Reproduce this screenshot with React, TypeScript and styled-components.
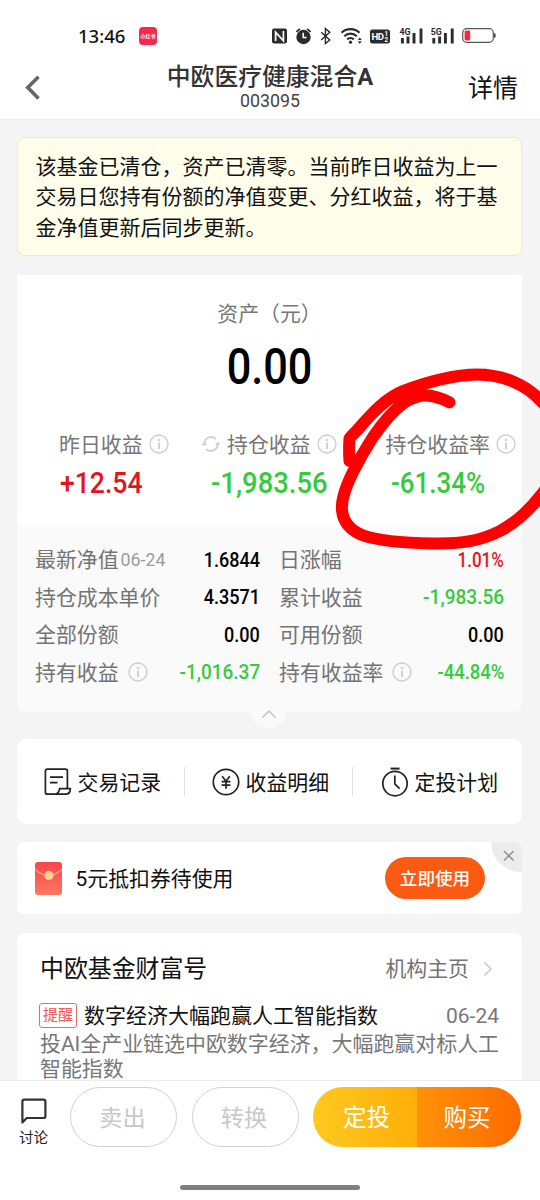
import React from 'react';
import styled, { createGlobalStyle } from 'styled-components';

const Global = createGlobalStyle`
  * { box-sizing: border-box; }
  body { margin: 0; background: #f4f4f4; }
`;

const RED = '#e8121a';
const GREEN = '#36cb3c';

const Screen = styled.div`
  position: relative;
  display: flex;
  flex-direction: column;
  width: 540px;
  height: 1200px;
  overflow: hidden;
  background: #f4f4f4;
  color: #111;
  font-family: Roboto, 'Noto Sans CJK SC', sans-serif;
  font-size: 20.9px;
  line-height: 30px;
  white-space: nowrap;
`;

const Top = styled.header`
  flex: none;
  height: 120px;
  background: #fff;
  border-bottom: 1px solid #f0f0f0;
`;

const StatusBar = styled.div`
  display: flex;
  align-items: center;
  height: 60px;
  padding: 12px 44px 0 78px;
`;

const Clock = styled.span`
  width: 61px;
  font-family: 'Noto Sans', sans-serif;
  font-size: 18.5px;
  font-weight: 500;
  color: #111;
`;

const AppBadge = styled.span`
  display: flex;
  align-items: center;
  justify-content: center;
  width: 18px;
  height: 18px;
  border-radius: 4px;
  background: #f9284a;
  color: #fff;
  font-size: 5px;
  font-weight: 700;
  line-height: 6px;
`;

const StatusIcons = styled.svg`
  display: block;
  margin-left: auto;
`;

const NavBar = styled.div`
  display: grid;
  grid-template-columns: 90px 1fr 90px;
  height: 59px;
`;

const Back = styled.div`
  padding: 15px 0 0 24px;
`;

const NavTitle = styled.div`
  display: flex;
  flex-direction: column;
  align-items: center;
  padding-top: 3px;
`;

const FundName = styled.h1`
  margin: 0;
  font-size: 23.8px;
  line-height: 28px;
  font-weight: 500;
  color: #333;
`;

const FundNameLatin = styled.span`
  font-weight: 700;
`;

const FundCode = styled.div`
  font-size: 17.8px;
  line-height: 20px;
  color: #444;
`;

const Detail = styled.div`
  padding: 13px 22px 0 0;
  text-align: right;
  font-size: 25px;
  line-height: 32px;
  color: #111;
`;

const Content = styled.main`
  flex: none;
  display: flex;
  flex-direction: column;
  height: 960px;
  padding: 17px 18px 0 17px;
  overflow: hidden;
`;

const Notice = styled.p`
  flex: none;
  height: 119px;
  margin: 0 0 19px;
  padding: 14px 17.5px 0;
  border: 1px solid #fbeaa6;
  border-radius: 8px;
  background: #fefeea;
  font-size: 21px;
  line-height: 30.4px;
`;

const Card = styled.section<{ $h: number; $gap: number; $r?: number }>`
  position: relative;
  flex: none;
  display: flex;
  height: ${p => p.$h}px;
  margin-bottom: ${p => p.$gap}px;
  border-radius: ${p => p.$r ?? 8}px;
  background: #fff;
`;

const AssetCard = styled(Card)`
  flex-direction: column;
  background: #fafafa;
  border-radius: 4px 4px 8px 8px;
`;

const Summary = styled.div`
  height: 251px;
  padding-top: 24px;
  border-radius: 4px 4px 8px 8px;
  background: #fff;
`;

const AssetLabel = styled.div`
  text-align: center;
  color: #777;
`;

const Num = styled.span<{ $size: number; $scale: number; $color?: string; $origin?: string }>`
  display: inline-block;
  font-family: Roboto, sans-serif;
  font-size: ${p => p.$size}px;
  font-weight: 500;
  color: ${p => p.$color ?? '#000'};
  transform: scaleX(${p => p.$scale});
  transform-origin: ${p => p.$origin ?? 'center'};
`;

const AssetValue = styled.div`
  margin-top: 13px;
  height: 50px;
  line-height: 51px;
  text-align: center;
`;

const Stats = styled.div`
  display: grid;
  grid-template-columns: 142px 182px 181px;
  margin-top: 36px;
`;

const Stat = styled.div<{ $pad: number }>`
  padding-left: ${p => p.$pad}px;
`;

const StatLabel = styled.div`
  display: flex;
  align-items: center;
  height: 32px;
  color: #777;
`;

const LabelText = styled.span`
  padding-top: 1px;
`;

const StatValue = styled.div<{ $pad: number }>`
  height: 44px;
  padding-left: ${p => p.$pad}px;
  line-height: 46px;
`;

const IconGap = styled.span<{ $l?: number; $r?: number }>`
  display: flex;
  flex: none;
  margin-left: ${p => p.$l ?? 0}px;
  margin-right: ${p => p.$r ?? 0}px;
`;

const Table = styled.div`
  display: grid;
  grid-template-columns: 225px 225px;
  grid-auto-rows: 37.5px;
  column-gap: 19px;
  padding: 15px 18px 0;
`;

const Cell = styled.div`
  display: flex;
  align-items: center;
  justify-content: space-between;
`;

const CellLabel = styled.span`
  display: flex;
  align-items: center;
  color: #737373;
`;

const SmallDate = styled.span`
  margin-left: 2px;
  font-size: 17.8px;
  color: #9c9c9c;
`;

const Handle = styled.div`
  position: absolute;
  left: 233px;
  bottom: -16px;
  display: flex;
  align-items: center;
  justify-content: center;
  width: 37px;
  height: 37px;
  padding-top: 8px;
  border-radius: 50%;
  background: #fafafa;
`;

const QuickItem = styled.div<{ $w: number; $pad: number }>`
  display: flex;
  align-items: center;
  gap: 6px;
  width: ${p => p.$w}px;
  padding-left: ${p => p.$pad}px;
`;

const QuickText = styled.span`
  padding-top: 2px;
`;

const QuickDivider = styled.i`
  align-self: center;
  width: 1px;
  height: 30px;
  background: #e4e4e4;
`;

const Coupon = styled(Card)`
  align-items: center;
  padding-left: 17px;
  overflow: hidden;
`;

const CouponText = styled.span`
  margin-left: 12.5px;
  padding-top: 2px;
`;

const UseButton = styled.button`
  width: 100px;
  height: 42px;
  margin-left: auto;
  margin-right: 37px;
  padding: 0;
  border: 0;
  border-radius: 21px;
  background: #fb5a13;
  color: #fff;
  font: 500 17.6px/44px Roboto, 'Noto Sans CJK SC', sans-serif;
`;

const CloseCorner = styled.div`
  position: absolute;
  top: 0;
  right: 0;
  width: 31px;
  height: 30px;
  padding: 8px 0 0 12px;
  border-bottom-left-radius: 30px;
  background: #ececec;
  line-height: 0;
`;

const News = styled(Card)`
  flex-direction: column;
  padding: 19px 23px 0;
`;

const NewsHead = styled.div`
  display: flex;
  align-items: center;
  height: 34px;
`;

const NewsName = styled.h2`
  margin: 0 auto 0 0;
  font-size: 23.9px;
  font-weight: 400;
`;

const NewsLink = styled.span`
  display: flex;
  align-items: center;
  gap: 14px;
  padding-right: 6px;
  color: #737373;
`;

const NewsRow = styled.div`
  display: flex;
  align-items: center;
  height: 30px;
  margin-top: 15px;
  font-size: 21px;
`;

const Tag = styled.span`
  width: 38px;
  height: 25px;
  margin-top: -2px;
  margin-left: -1px;
  margin-right: 7px;
  border: 1px solid #ea6a6a;
  border-radius: 3px;
  color: #ea5a5a;
  font-size: 15px;
  line-height: 23px;
  text-align: center;
`;

const NewsDate = styled.span`
  margin-left: auto;
  color: #777;
`;

const NewsBody = styled.p`
  margin: 1px 0 0;
  color: #777;
  font-size: 20.95px;
  line-height: 24.5px;
`;

const BottomBar = styled.footer`
  flex: none;
  height: 120px;
  border-top: 1px solid #ececec;
  background: #fff;
`;

const Actions = styled.div`
  display: flex;
  height: 66px;
  padding: 6px 19px 0 18px;
`;

const Discuss = styled.div`
  display: flex;
  flex-direction: column;
  align-items: center;
  gap: 2px;
  width: 31px;
  margin-right: 21px;
  padding-top: 10px;
  font-size: 14.5px;
  line-height: 24px;
  color: #222;
`;

const DiscussIcon = styled.svg`
  flex: none;
`;

const GhostButton = styled.button`
  width: 107px;
  height: 60px;
  margin-right: 14.5px;
  padding: 0 2px 0 0;
  border: 1px solid #d2d2d2;
  border-radius: 30px;
  background: #fff;
  color: #c8c8c8;
  font: 400 23.2px/60px Roboto, 'Noto Sans CJK SC', sans-serif;
`;

const BuyGroup = styled.div`
  display: flex;
  width: 208px;
  height: 60px;
  overflow: hidden;
  border-radius: 30px;
`;

const BuyButton = styled.button<{ $from: string; $to: string; $left?: number; $right?: number }>`
  flex: none;
  width: 104px;
  padding: 0 ${p => p.$right ?? 0}px 0 ${p => p.$left ?? 0}px;
  border: 0;
  background: linear-gradient(90deg, ${p => p.$from}, ${p => p.$to});
  color: #fff;
  font: 400 23.5px/62px Roboto, 'Noto Sans CJK SC', sans-serif;
`;

const HomeBar = styled.div`
  width: 180px;
  height: 5px;
  margin: 38px auto 0;
  border-radius: 3px;
  background: #808080;
`;

const Marker = styled.svg`
  position: absolute;
  left: 0;
  top: 0;
  pointer-events: none;
`;

const Info = () => (
  <svg width="20" height="20" viewBox="0 0 20 20" fill="none" stroke="#cfcfcf" strokeWidth="1.4">
    <circle cx="10" cy="10" r="9" />
    <path d="M10 8.6V15" strokeWidth="1.9" />
    <circle cx="10" cy="5.9" r="1.2" fill="#cfcfcf" stroke="none" />
  </svg>
);

const Refresh = () => (
  <svg width="20" height="20" viewBox="0 0 20 20" fill="none" stroke="#cfcfcf" strokeWidth="1.8">
    <path d="M3.3 11V9.5A6.8 6.8 0 0 1 15 5.2M16.7 9v1.5A6.8 6.8 0 0 1 5 14.8" />
    <path d="M.4 11.2h5.8L3.3 7.6zM13.8 8.8h5.8L16.7 12.4z" fill="#cfcfcf" stroke="none" />
  </svg>
);

const StatusGlyphs = () => (
  <StatusIcons width="226" height="20" viewBox="270 26 226 20" fill="none" stroke="#2b2b2b">
    {/* NFC */}
    <rect x="272" y="28.5" width="15" height="15" rx="2" fill="#2b2b2b" stroke="none" />
    <path d="M275.6 41V32.2l7.8 8.6V31" stroke="#fff" strokeWidth="1.7" />
    {/* alarm */}
    <circle cx="303.5" cy="37" r="7.2" fill="#2b2b2b" stroke="none" />
    <path d="M303.2 32.8v4.8h3.4" stroke="#fff" strokeWidth="1.5" />
    <path d="M296.4 31.8l3.4-3M310.6 31.8l-3.4-3" strokeWidth="1.8" />
    {/* bluetooth */}
    <path d="M321.2 32.2l8.6 7.8-4.4 3.6V28.6l4.4 3.6-8.6 7.8" strokeWidth="1.4" />
    {/* wifi */}
    <path d="M341.5 32.8a13 13 0 0 1 18 0M344.3 36.2a9 9 0 0 1 12.4 0M347.2 39.4a5 5 0 0 1 6.6 0" strokeWidth="2.2" />
    <circle cx="350.5" cy="42.2" r="1.6" fill="#2b2b2b" stroke="none" />
    <path d="M357.8 40l2-2.6 2 2.6zM357.8 41.2l2 2.6 2-2.6z" fill="#2b2b2b" stroke="none" />
    {/* HD */}
    <rect x="370" y="29.5" width="20" height="14" rx="2.5" fill="#2b2b2b" stroke="none" />
    <g fill="#fff" stroke="none" fontFamily="Roboto, sans-serif" fontWeight="700">
      <text x="371.6" y="40.4" fontSize="9.6" textLength="12.4">HD</text>
      <text x="384.6" y="36.4" fontSize="6.4">1</text>
      <text x="384.6" y="42.2" fontSize="6.4">2</text>
    </g>
    {/* signals */}
    <g fill="#2b2b2b" stroke="none" fontFamily="Roboto, sans-serif" fontWeight="700" fontSize="8.8">
      <text x="399.6" y="34.8" textLength="11">4G</text>
      <text x="430.8" y="34.8" textLength="11">5G</text>
    </g>
    <path d="M402.4 38v5.4M408 36.6v6.8M414 33v10.4M421 28.6v14.8M433.8 38v5.4M439.6 36.6v6.8M445.4 33v10.4M452.2 28.6v14.8" strokeWidth="2.9" />
    {/* battery */}
    <rect x="462.7" y="28.7" width="30.6" height="13.6" rx="4" stroke="#555" strokeWidth="1.2" />
    <rect x="464.6" y="30.6" width="5.6" height="9.8" rx="1.4" fill="#ee2c40" stroke="none" />
    <path d="M494.8 33.6v4" strokeWidth="1.4" />
  </StatusIcons>
);

const stats = [
  { label: '昨日收益', value: '+12.54', color: RED, pad: 42, vpad: 1, scale: 0.9, refresh: false },
  { label: '持仓收益', value: '-1,983.56', color: GREEN, pad: 42, vpad: 9.5, scale: 0.93, refresh: true },
  { label: '持仓收益率', value: '-61.34%', color: GREEN, pad: 44.5, vpad: 5, scale: 0.88, refresh: false },
];

const cells = [
  { label: '最新净值', date: '06-24', value: '1.6844', scale: 0.88 },
  { label: '日涨幅', value: '1.01%', color: RED, scale: 0.83 },
  { label: '持仓成本单价', value: '4.3571', scale: 0.88 },
  { label: '累计收益', value: '-1,983.56', color: GREEN, scale: 0.93 },
  { label: '全部份额', value: '0.00', scale: 0.88 },
  { label: '可用份额', value: '0.00', scale: 0.88 },
  { label: '持有收益', value: '-1,016.37', color: GREEN, info: true, scale: 0.925 },
  { label: '持有收益率', value: '-44.84%', color: GREEN, info: true, scale: 0.9 },
];

export default function App() {
  return (
    <Screen>
      <Global />
      <Top>
        <StatusBar>
          <Clock>13:46</Clock>
          <AppBadge>小红书</AppBadge>
          <StatusGlyphs />
        </StatusBar>
        <NavBar>
          <Back>
            <svg width="18" height="26" viewBox="0 0 18 26" fill="none" stroke="#666" strokeWidth="3.6">
              <path d="M14.5 1.8L3.8 12.6l10.7 10.8" />
            </svg>
          </Back>
          <NavTitle>
            <FundName>中欧医疗健康混合<FundNameLatin>A</FundNameLatin></FundName>
            <FundCode>003095</FundCode>
          </NavTitle>
          <Detail>详情</Detail>
        </NavBar>
      </Top>

      <Content>
        <Notice>
          该基金已清仓，资产已清零。当前昨日收益为上一<br />
          交易日您持有份额的净值变更、分红收益，将于基<br />
          金净值更新后同步更新。
        </Notice>

        <AssetCard $h={437} $gap={27}>
          <Summary>
            <AssetLabel>资产（元）</AssetLabel>
            <AssetValue><Num $size={50} $scale={0.865}>0.00</Num></AssetValue>
            <Stats>
              {stats.map(s => (
                <Stat key={s.label} $pad={s.pad}>
                  <StatLabel>
                    {s.refresh && <IconGap $r={6}><Refresh /></IconGap>}
                    <LabelText>{s.label}</LabelText>
                    <IconGap $l={6}><Info /></IconGap>
                  </StatLabel>
                  <StatValue $pad={s.vpad}>
                    <Num $size={29.5} $scale={s.scale} $color={s.color} $origin="left">{s.value}</Num>
                  </StatValue>
                </Stat>
              ))}
            </Stats>
          </Summary>
          <Table>
            {cells.map(c => (
              <Cell key={c.label}>
                <CellLabel>
                  <LabelText>{c.label}</LabelText>
                  {c.date && <SmallDate>{c.date}</SmallDate>}
                  {c.info && <IconGap $l={9}><Info /></IconGap>}
                </CellLabel>
                <Num $size={20.5} $scale={c.scale} $color={c.color} $origin="right">{c.value}</Num>
              </Cell>
            ))}
          </Table>
          <Handle>
            <svg width="16" height="10" viewBox="0 0 16 10" fill="none" stroke="#c4c4c4" strokeWidth="1.5">
              <path d="M1.5 8.5L8 2l6.5 6.5" />
            </svg>
          </Handle>
        </AssetCard>

        <Card $h={85} $gap={18} $r={9}>
          <QuickItem $w={167} $pad={26.5}>
            <svg width="28" height="28" viewBox="0 0 28 28" fill="none" stroke="#222" strokeWidth="1.7" strokeLinejoin="round">
              <path d="M23.4 20.5V3.2Q23.4 1.2 21.4 1.2H3.4Q1.4 1.2 1.4 3.2V24.2Q1.4 26.2 3.4 26.2H21.6Q26.2 26.2 26.4 20.6H15.6Q14.9 25.4 11.4 26.1" />
              <path d="M6 9.2h13M6 14.6h7.5" />
            </svg>
            <QuickText>交易记录</QuickText>
          </QuickItem>
          <QuickDivider />
          <QuickItem $w={167} $pad={26.5}>
            <svg width="28" height="28" viewBox="0 0 28 28" fill="none" stroke="#222" strokeWidth="1.7">
              <circle cx="14" cy="14" r="12.7" />
              <path d="M10.2 8.2l3.8 5 3.8-5M14 13.2v7.6M9.6 13.6h8.8M9.6 17.2h8.8" />
            </svg>
            <QuickText>收益明细</QuickText>
          </QuickItem>
          <QuickDivider />
          <QuickItem $w={169} $pad={27.5}>
            <svg width="28" height="30" viewBox="0 0 28 30" fill="none" stroke="#222" strokeWidth="1.7">
              <circle cx="14" cy="16.6" r="12.2" />
              <path d="M9.6 1.6h9" strokeWidth="2" />
              <path d="M13.8 8.6v8.2l4.8 4.8" />
            </svg>
            <QuickText>定投计划</QuickText>
          </QuickItem>
        </Card>

        <Coupon $h={72} $gap={19} $r={7}>
          <svg width="29" height="34" viewBox="0 0 29 34">
            <defs>
              <linearGradient id="envelope" x1="0" y1="0" x2="0" y2="1">
                <stop offset="0" stopColor="#fb444b" />
                <stop offset="1" stopColor="#fd7861" />
              </linearGradient>
            </defs>
            <rect x="1" y="1" width="27" height="33" rx="3" fill="url(#envelope)" />
            <path d="M1 8.2Q14.5 21 28 8.2" fill="none" stroke="#fda08a" strokeWidth="1.2" />
            <circle cx="15" cy="14.4" r="4.6" fill="#fcd28c" />
          </svg>
          <CouponText>5元抵扣券待使用</CouponText>
          <UseButton>立即使用</UseButton>
          <CloseCorner>
            <svg width="12" height="12" viewBox="0 0 12 12" stroke="#8c8c8c" strokeWidth="1.4">
              <path d="M1 1l9.6 9.6M10.6 1L1 10.6" />
            </svg>
          </CloseCorner>
        </Coupon>

        <News $h={170} $gap={0}>
          <NewsHead>
            <NewsName>中欧基金财富号</NewsName>
            <NewsLink>
              机构主页
              <svg width="10" height="16" viewBox="0 0 10 16" fill="none" stroke="#cacaca" strokeWidth="1.6">
                <path d="M1.5 1.5L8 8l-6.5 6.5" />
              </svg>
            </NewsLink>
          </NewsHead>
          <NewsRow>
            <Tag>提醒</Tag>
            数字经济大幅跑赢人工智能指数
            <NewsDate>06-24</NewsDate>
          </NewsRow>
          <NewsBody>
            投AI全产业链选中欧数字经济，大幅跑赢对标人工<br />
            智能指数
          </NewsBody>
        </News>
      </Content>

      <BottomBar>
        <Actions>
          <Discuss>
            <DiscussIcon width="28" height="28" viewBox="0 0 28 28" fill="none" stroke="#333" strokeWidth="2.2" strokeLinejoin="round">
              <path d="M2.4 25.4V4.4Q2.4 2.6 4.2 2.6H23.6Q25.4 2.6 25.4 4.4V19.2Q25.4 21 23.6 21H6.8z" />
            </DiscussIcon>
            讨论
          </Discuss>
          <GhostButton>卖出</GhostButton>
          <GhostButton>转换</GhostButton>
          <BuyGroup>
            <BuyButton $from="#fdc920" $to="#ffae08" $left={3}>定投</BuyButton>
            <BuyButton $from="#ff9208" $to="#ff6a00" $right={4}>购买</BuyButton>
          </BuyGroup>
        </Actions>
        <HomeBar />
      </BottomBar>

      {/* hand-drawn circle around the return rate */}
      <Marker width="540" height="600" viewBox="0 0 540 600" fill="none" stroke="#fe0000" strokeWidth="12" strokeLinecap="round" strokeLinejoin="round">
        <path d="M449.5 402.3C441 398 434 395.7 426 395.5C418 395.3 412 398 405 402C392 411 382 424 373 437C364 451 358 462 353 472C346 486 341 499 342 510C343 522 350 530 362 535C378 541 400 543 433 543.4C462 544 480 541 500 531C517 522 532 507 542 494C560 470 570 425 542 402C526 384 502 374.4 477 374.4C454 374.6 424 383 403 391C386 398 372 413 360 427C356 432 352 435 349.5 438.5C349 446 349 454 349.5 461" />
      </Marker>
    </Screen>
  );
}
